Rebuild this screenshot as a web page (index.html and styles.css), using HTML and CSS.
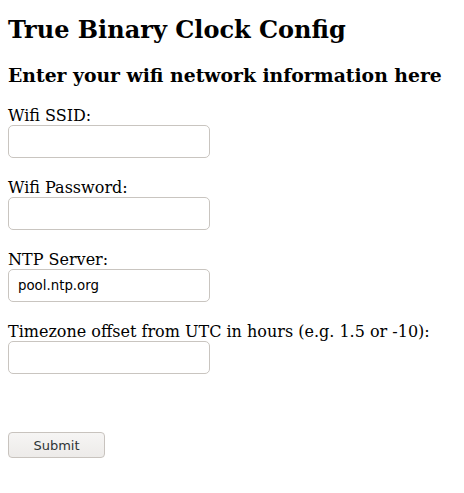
FILE: index.html
```html
<!DOCTYPE html>
<html>
<head>
<meta charset="utf-8">
<link rel="stylesheet" href="styles.css">
</head>
<body>
<h1 class="title">True Binary Clock Config</h1>
<h2 class="subtitle">Enter your wifi network information here</h2>
<form class="form">
  <div class="field">
    <label class="label" for="ssid">Wifi SSID:</label>
    <input class="input" id="ssid" type="text">
  </div>
  <div class="field">
    <label class="label" for="pw">Wifi Password:</label>
    <input class="input" id="pw" type="password">
  </div>
  <div class="field">
    <label class="label" for="ntp">NTP Server:</label>
    <input class="input" id="ntp" type="text" value="pool.ntp.org">
  </div>
  <div class="field">
    <label class="label" for="tz">Timezone offset from UTC in hours (e.g. 1.5 or -10):</label>
    <input class="input" id="tz" type="text">
  </div>
  <div class="actions">
    <button class="submit" type="submit">Submit</button>
  </div>
</form>
</body>
</html>
```
FILE: styles.css
```css
html, body {
  margin: 0;
  padding: 0;
  background: #ffffff;
}
body {
  padding: 8px;
  font-family: "DejaVu Serif", serif;
  color: #000000;
}
.title {
  font-size: 24px;
  font-weight: bold;
  margin: 8px 0 0 0;
  line-height: 28px;
}
.subtitle {
  font-size: 18.8px;
  font-weight: bold;
  margin: 20px 0 0 0;
  line-height: 22px;
}
.form {
  display: flex;
  flex-direction: column;
  margin-top: 20px;
}
.field {
  display: flex;
  flex-direction: column;
  align-items: flex-start;
  margin-bottom: 20px;
}
.label {
  font-size: 16px;
  line-height: 19px;
}
.input {
  box-sizing: border-box;
  width: 202px;
  height: 33px;
  margin: 0;
  border: 1px solid #c9c5c0;
  border-radius: 5px;
  padding: 0 9px;
  font-family: "DejaVu Sans", sans-serif;
  font-size: 13.33px;
  color: #000;
  background: #fff;
  outline: none;
}
.actions {
  margin-top: 38px;
}
.submit {
  box-sizing: border-box;
  width: 97px;
  height: 26px;
  border: 1px solid #c8c3be;
  border-radius: 4px;
  background: linear-gradient(#f6f5f4, #edebe9);
  font-family: "DejaVu Sans", sans-serif;
  font-size: 13px;
  color: #2e3436;
  padding: 0;
}
```
